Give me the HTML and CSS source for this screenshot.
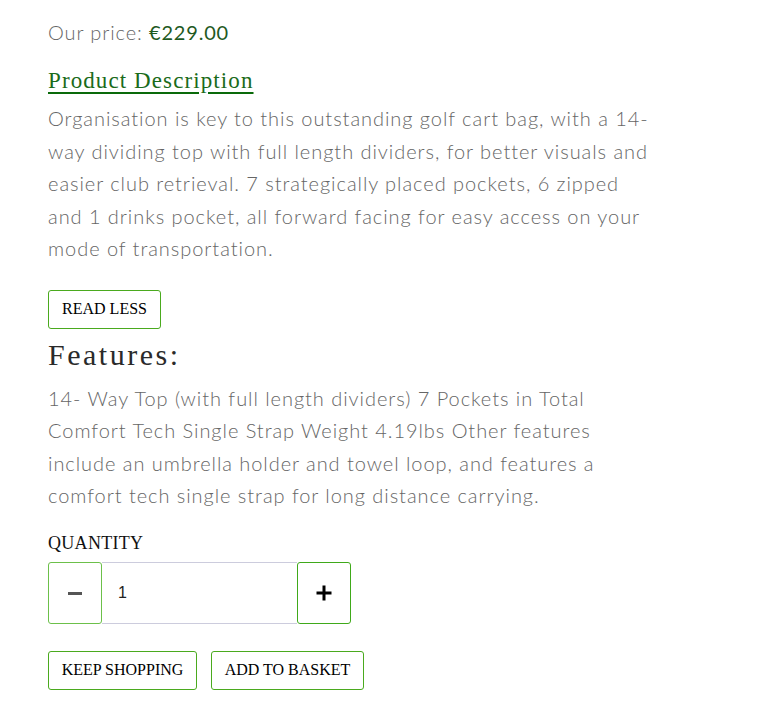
FILE: index.html
```html
<!DOCTYPE html>
<html>
<head>
<meta charset="utf-8">
<link rel="stylesheet" href="styles.css">
</head>
<body>
<div class="product">
  <p class="price">Our price: <span class="amount">€229.00</span></p>
  <h2 class="desc-title">Product Description</h2>
  <p class="body-text">Organisation is key to this outstanding golf cart bag, with a 14-way dividing top with full length dividers, for better visuals and easier club retrieval. 7 strategically placed pockets, 6 zipped and 1 drinks pocket, all forward facing for easy access on your mode of transportation.</p>
  <button class="btn btn-read">READ LESS</button>
  <h3 class="features-title">Features:</h3>
  <p class="body-text">14- Way Top (with full length dividers) 7 Pockets in Total Comfort Tech Single Strap Weight 4.19lbs Other features include an umbrella holder and towel loop, and features a comfort tech single strap for long distance carrying.</p>
  <div class="qty-label">QUANTITY</div>
  <div class="qty">
    <button class="qty-btn minus"><svg width="16" height="16" viewBox="0 0 16 16"><rect x="1" y="7" width="14" height="3" fill="#555"/></svg></button>
    <input class="qty-input" type="text" value="1">
    <button class="qty-btn plus"><svg width="16" height="16" viewBox="0 0 16 16"><rect x="0.5" y="6.5" width="15" height="3" fill="#000"/><rect x="6.5" y="0.5" width="3" height="15" fill="#000"/></svg></button>
  </div>
  <div class="actions">
    <button class="btn">KEEP SHOPPING</button>
    <button class="btn">ADD TO BASKET</button>
  </div>
</div>
</body>
</html>
```

FILE: styles.css
```css
html, body { margin: 0; padding: 0; background: #fff; }
.product {
  width: 612px;
  padding: 14px 0 0 48px;
  font-family: Lato, "Open Sans", sans-serif;
  font-weight: 300;
  color: #666;
}
.price {
  margin: 0;
  font-size: 20px;
  line-height: 36px;
  letter-spacing: 0.9px;
}
.amount { color: #1f5a1f; font-weight: 400; letter-spacing: 0.8px; }
.desc-title {
  margin: 16px 0 0;
  font-family: "Liberation Serif", serif;
  font-weight: 400;
  font-size: 23px;
  line-height: 30px;
  color: #1a6b1a;
  text-decoration: underline;
  text-decoration-color: #0a6a0a;
  text-underline-offset: 4px;
  letter-spacing: 1.1px;
}
.body-text {
  margin: 6px 0 0;
  font-size: 20px;
  line-height: 32.5px;
  letter-spacing: 0.95px;
}
.btn {
  font-family: "Liberation Serif", serif;
  font-size: 16px;
  color: #000;
  background: #fff;
  border: 1px solid #4aaa1e;
  border-radius: 3px;
  padding: 0 14px;
  height: 39px;
  cursor: pointer;
}
.btn-read { margin-top: 25px; display: block; height: 39px; width: 113px; padding: 0; }
.features-title {
  margin: 9px 0 0;
  font-family: "Liberation Serif", serif;
  font-weight: 400;
  font-size: 30px;
  line-height: 34px;
  color: #2a2a2a;
  letter-spacing: 2.5px;
}
.features-title + .body-text { margin-top: 10px; }
.qty-label {
  margin-top: 19px;
  font-family: "Liberation Serif", serif;
  font-size: 18px;
  line-height: 24px;
  color: #111;
  letter-spacing: 0.3px;
}
.qty { display: flex; margin-top: 7px; height: 62px; width: 303px; }
.qty-btn {
  width: 54px;
  height: 62px;
  background: #fff;
  border: 1px solid #6cc04a;
  border-radius: 3px;
  display: flex;
  align-items: center;
  justify-content: center;
  padding: 0;
}
.plus { border-color: #3fa91a; }
.qty-input {
  flex: 1;
  min-width: 0;
  height: 62px;
  box-sizing: border-box;
  border: 1px solid #ccd;
  border-left: none;
  border-right: none;
  padding: 0 0 0 16px;
  font-family: Arial, "Liberation Sans", sans-serif;
  font-size: 16px;
  color: #222;
  outline: none;
}
.actions { display: flex; gap: 14px; margin-top: 27px; }
.actions .btn { height: 39px; }
.actions .btn:first-child { width: 149px; padding: 0; }
.actions .btn:last-child { width: 153px; padding: 0; }
```
